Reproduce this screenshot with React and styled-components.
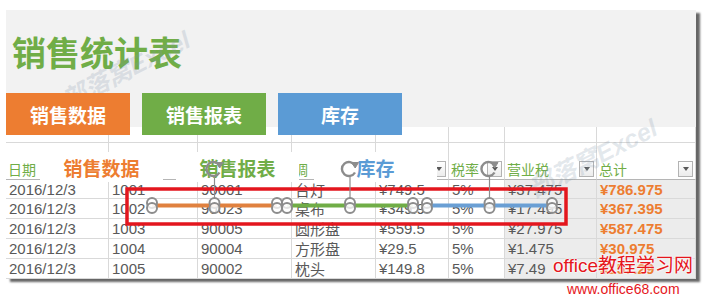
import React from 'react'
import styled, { createGlobalStyle } from 'styled-components'

const GlobalStyle = createGlobalStyle`
  html, body { margin: 0; padding: 0; background: #fff; }
  body { font-family: "Liberation Sans", "Noto Sans CJK SC", sans-serif; }
`

const ORANGE = '#ed7d31'
const GREEN = '#70ad47'
const BLUE = '#5b9bd5'
const CJK = '"Noto Sans CJK SC", sans-serif'

const headers = ['日期', '编号', '商品编号', '调', '单价', '税率', '营业税', '总计']

const rows = [
  ['2016/12/3', '1001', '90001', '台灯', '¥749.5', '5%', '¥37.475', '¥786.975'],
  ['2016/12/3', '1002', '90023', '桌布', '¥349.9', '5%', '¥17.495', '¥367.395'],
  ['2016/12/3', '1003', '90005', '圆形盘', '¥559.5', '5%', '¥27.975', '¥587.475'],
  ['2016/12/3', '1004', '90004', '方形盘', '¥29.5', '5%', '¥1.475', '¥30.975'],
  ['2016/12/3', '1005', '90002', '枕头', '¥149.8', '5%', '¥7.49', '¥157.29'],
]

const rowHeights = [19, 20, 20, 20, 20]

export default function App() {
  return (
    <>
      <GlobalStyle />
      <Page>
        <Sheet>
          <Banner>
            <Title>销售统计表</Title>
            <ButtonRow>
              <SheetButton $color={ORANGE}>销售数据</SheetButton>
              <SheetButton $color={GREEN}>销售报表</SheetButton>
              <SheetButton $color={BLUE}>库存</SheetButton>
            </ButtonRow>
          </Banner>
          <Grid>
            {headers.map((h, i) => <Cell key={'b' + i} $h={16} />)}
            {headers.map((h, i) => (
              <HeadCell key={'h' + i}>
                <span>{h}</span>
                <Filter />
              </HeadCell>
            ))}
            {rows.map((r, ri) =>
              r.map((v, ci) => (
                <Cell key={ri + '-' + ci} $h={rowHeights[ri]} $shade={ci >= 6} $total={ci === 7}>
                  {v}
                </Cell>
              ))
            )}
          </Grid>
        </Sheet>

        <Mark $x={125} $y={68}>部落窝Excel</Mark>
        <Mark $x={592} $y={156}>部落窝Excel</Mark>

        <Ghost $x={40} $color={ORANGE}>销售数据</Ghost>
        <Ghost $x={176} $color={GREEN}>销售报表</Ghost>
        <Ghost $x={314} $color={BLUE}>库存</Ghost>

        <Handles />

        <Brand>office教程学习网</Brand>
        <Site>www.office68.com</Site>
      </Page>
    </>
  )
}

function Rotate({ cx, cy }) {
  return (
    <g stroke="#8c8c8c" fill="none">
      <path d={`M ${cx + 6} ${cy - 3.5} A 7 7 0 1 0 ${cx + 6} ${cy + 3.5}`} strokeWidth="2.4" />
      <path d={`M ${cx + 2.5} ${cy - 6.5} L ${cx + 9.5} ${cy - 6.5} L ${cx + 6.2} ${cy - 1} Z`} fill="#8c8c8c" strokeWidth="1" />
    </g>
  )
}

function Handles() {
  const segs = [
    { x1: 152, x2: 277, c: '#e0813f' },
    { x1: 287, x2: 413, c: GREEN },
    { x1: 427, x2: 552, c: '#6a9fd4' },
  ]
  const dots = []
  segs.forEach(s => dots.push(s.x1, (s.x1 + s.x2) / 2, s.x2))
  return (
    <Overlay width="710" height="304" viewBox="0 0 710 304">
      <rect x="127" y="189" width="439" height="35" fill="none" stroke="#e3161e" strokeWidth="3.5" />
      {segs.map(s => (
        <line key={s.x1} x1={s.x1} y1="205.5" x2={s.x2} y2="205.5" stroke={s.c} strokeWidth="4" />
      ))}
      {segs.map(s => {
        const m = (s.x1 + s.x2) / 2
        return (
          <g key={'r' + s.x1}>
            <line x1={m} y1="177" x2={m} y2="199" stroke="#8c8c8c" strokeWidth="1.2" />
            <Rotate cx={m - 1} cy={169} />
          </g>
        )
      })}
      {dots.map((x, i) => (
        <g key={'d' + i} stroke="#8c8c8c" strokeWidth="2" fill="#fff" fillOpacity="0.75">
          <circle cx={x} cy="203" r="5" />
          <circle cx={x} cy="208" r="5" />
        </g>
      ))}
    </Overlay>
  )
}

const Page = styled.div`
  position: relative;
  width: 710px;
  height: 304px;
  overflow: hidden;
  padding: 10px 0 0 6px;
  box-sizing: border-box;
`

const Sheet = styled.div`
  width: 690px;
  background: #fff;
  box-shadow: 4px 3px 2px rgba(0, 0, 0, 0.6);
`

const Banner = styled.div`
  height: 117px;
  background: #f2f2f2;
  display: flex;
  flex-direction: column;
  padding-top: 20px;
  box-sizing: border-box;
`

const Title = styled.h1`
  margin: 0 0 0 6px;
  font: 700 34px/44px ${CJK};
  color: ${GREEN};
`

const ButtonRow = styled.div`
  display: flex;
  gap: 12px;
  margin-top: 19px;
  position: relative;
  z-index: 2;
`

const SheetButton = styled.div`
  width: 124px;
  height: 42px;
  display: flex;
  align-items: center;
  justify-content: center;
  background: ${p => p.$color};
  color: #fff;
  font: 700 19px ${CJK};
`

const Grid = styled.div`
  display: grid;
  grid-template-columns: 103px 89px 94px 84px 73px 56px 92px 99px;
`

const Cell = styled.div`
  height: ${p => p.$h}px;
  box-sizing: border-box;
  border-right: 1px solid #d9d9d9;
  border-bottom: 1px solid #d9d9d9;
  padding-left: 3px;
  display: flex;
  align-items: center;
  background: ${p => (p.$shade ? '#ececec' : '#fff')};
  color: ${p => (p.$total ? ORANGE : '#595959')};
  font-weight: ${p => (p.$total ? 700 : 400)};
  font-size: 15px;
  white-space: nowrap;
  overflow: hidden;
`

const HeadCell = styled.div`
  height: 37px;
  box-sizing: border-box;
  border-right: 1px solid #d9d9d9;
  border-bottom: 1px solid #b5b5b5;
  padding: 0 2px 2px 2px;
  display: flex;
  align-items: flex-end;
  justify-content: space-between;
  color: ${GREEN};
  font: 14px/16px ${CJK};
`

const Filter = styled.span`
  width: 13px;
  height: 14px;
  border: 1px solid #b3b3b3;
  background: linear-gradient(#fff, #ececec);
  display: flex;
  align-items: center;
  justify-content: center;
  &::after {
    content: '';
    border-left: 3.5px solid transparent;
    border-right: 3.5px solid transparent;
    border-top: 4px solid #595959;
  }
`

const Ghost = styled.div`
  position: absolute;
  left: ${p => p.$x}px;
  top: 152px;
  width: 123px;
  height: 30px;
  padding-top: 3px;
  box-sizing: border-box;
  background: #fff;
  color: ${p => p.$color};
  font: 700 19px/26px ${CJK};
  text-align: center;
`

const Overlay = styled.svg`
  position: absolute;
  left: 0;
  top: 0;
  pointer-events: none;
`

const Mark = styled.div`
  position: absolute;
  left: ${p => p.$x}px;
  top: ${p => p.$y}px;
  transform: translate(-50%, -50%) rotate(-27deg);
  font: italic 700 25px "Liberation Sans", ${CJK};
  color: rgba(130, 150, 170, 0.22);
  white-space: nowrap;
  pointer-events: none;
`

const Brand = styled.div`
  position: absolute;
  left: 553px;
  top: 256px;
  color: #e5161c;
  font: 19px/20px "Liberation Sans", ${CJK};
  text-shadow: 0 0 2px #fff, 0 0 2px #fff, 0 0 2px #fff;
  white-space: nowrap;
`

const Site = styled.div`
  position: absolute;
  left: 567px;
  top: 282px;
  color: #e5161c;
  font: 14px/14px "Liberation Sans", sans-serif;
  white-space: nowrap;
`
